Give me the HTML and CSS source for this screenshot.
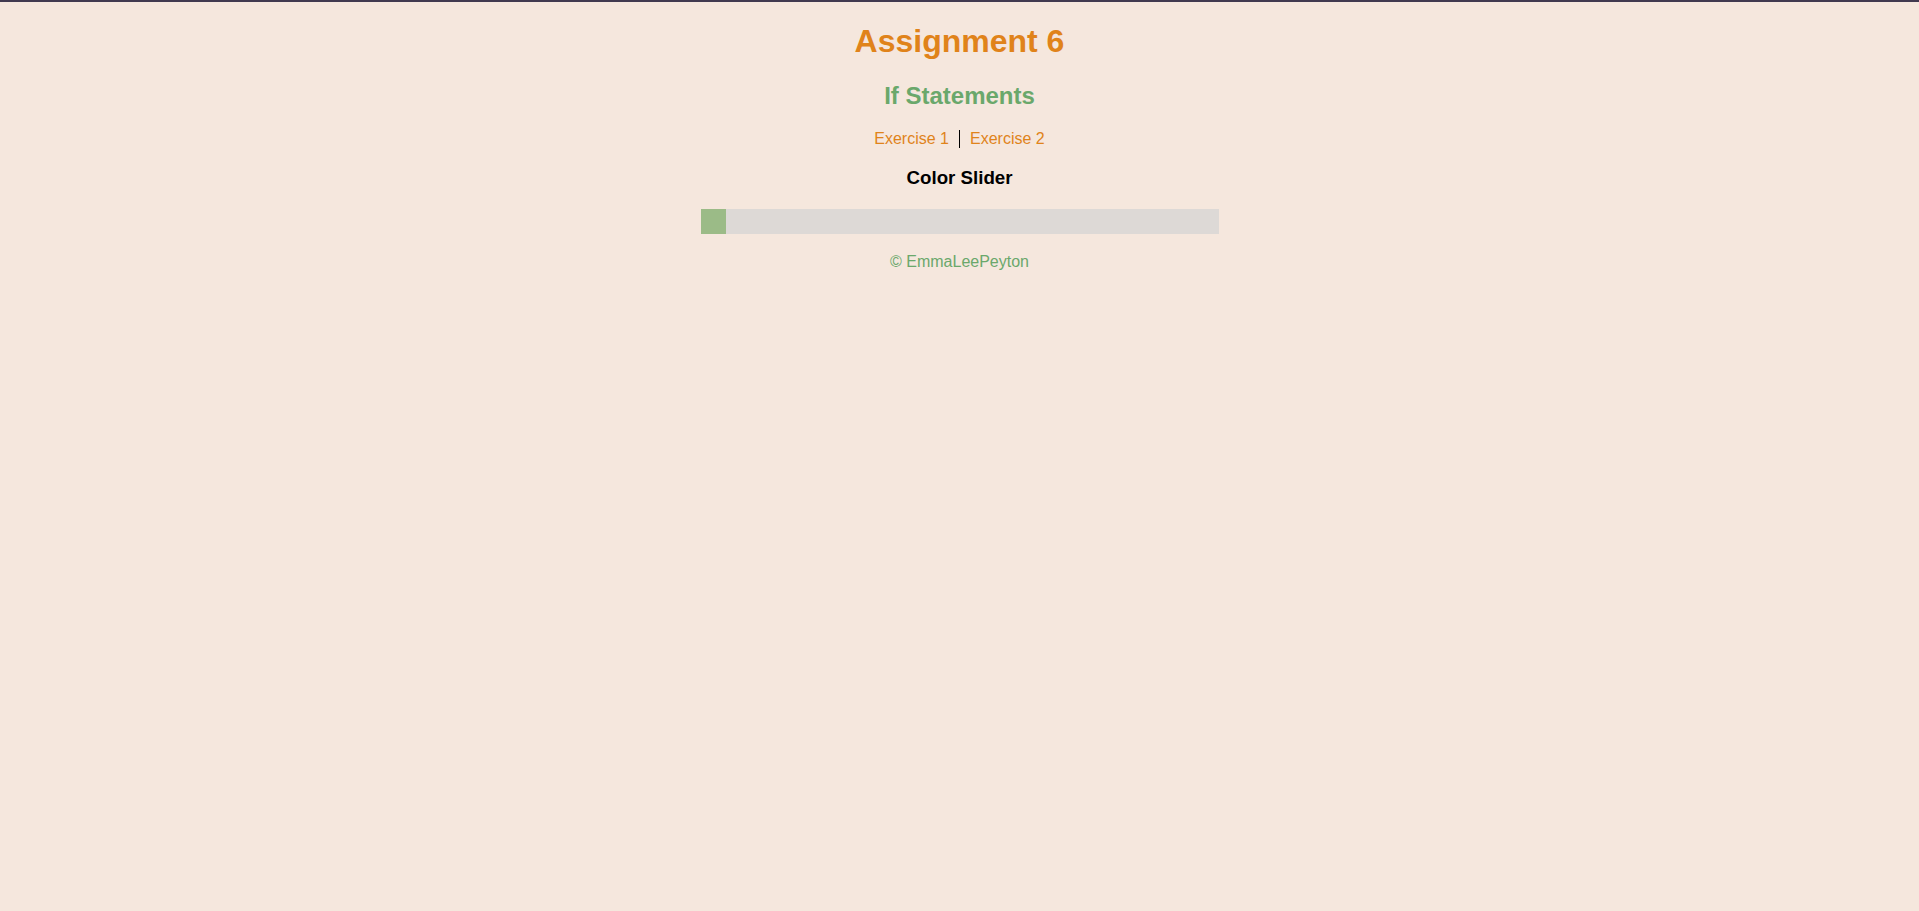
FILE: index.html
```html
<!DOCTYPE html>
<html lang="en">
<head>
<meta charset="utf-8">
<title>Assignment 6</title>
<link rel="stylesheet" href="styles.css">
</head>
<body>
  <header class="page-header">
    <h1 class="title">Assignment 6</h1>
    <h2 class="subtitle">If Statements</h2>
    <nav class="nav">
      <a class="nav-link nav-link-first" href="#">Exercise 1</a>
      <a class="nav-link nav-link-second" href="#">Exercise 2</a>
    </nav>
  </header>
  <main class="content">
    <h3 class="section-title">Color Slider</h3>
    <div class="slider-wrap">
      <input class="slider" type="range" min="0" max="100" value="0">
    </div>
    <p class="footer">© EmmaLeePeyton</p>
  </main>
</body>
</html>
```

FILE: styles.css
```css
html {
  background: #f5e7dd;
  border-top: 2px solid #41394f;
}

body {
  margin: 0 8px;
  font-family: "Liberation Sans", Arial, sans-serif;
  text-align: center;
  color: #000;
}

.title {
  font-size: 32px;
  font-weight: bold;
  color: #e0831a;
  margin: 21.44px 0;
}

.subtitle {
  font-size: 24px;
  font-weight: bold;
  color: #6aa86b;
  margin: 19.92px 0;
}

.nav {
  display: flex;
  justify-content: center;
  margin: 16px 0;
  font-size: 16px;
  line-height: 18.4px;
}

.nav-link {
  color: #e0831a;
  text-decoration: none;
}

.nav-link-first {
  padding-right: 10px;
  border-right: 1px solid #000;
}

.nav-link-second {
  padding-left: 10px;
}

.section-title {
  font-size: 18.72px;
  font-weight: bold;
  margin: 18.72px 0;
}

.slider-wrap {
  display: flex;
  justify-content: center;
}

.slider {
  -webkit-appearance: none;
  appearance: none;
  display: block;
  width: 518px;
  height: 25px;
  margin: 1px 0 3px;
  padding: 0;
  background: #ddd9d6;
  outline: none;
  border: none;
}

.slider::-webkit-slider-thumb {
  -webkit-appearance: none;
  appearance: none;
  width: 25px;
  height: 25px;
  background: #9bbb87;
  border: none;
  cursor: pointer;
}

.footer {
  margin: 16px 0;
  font-size: 16px;
  color: #6aa86b;
}
```
